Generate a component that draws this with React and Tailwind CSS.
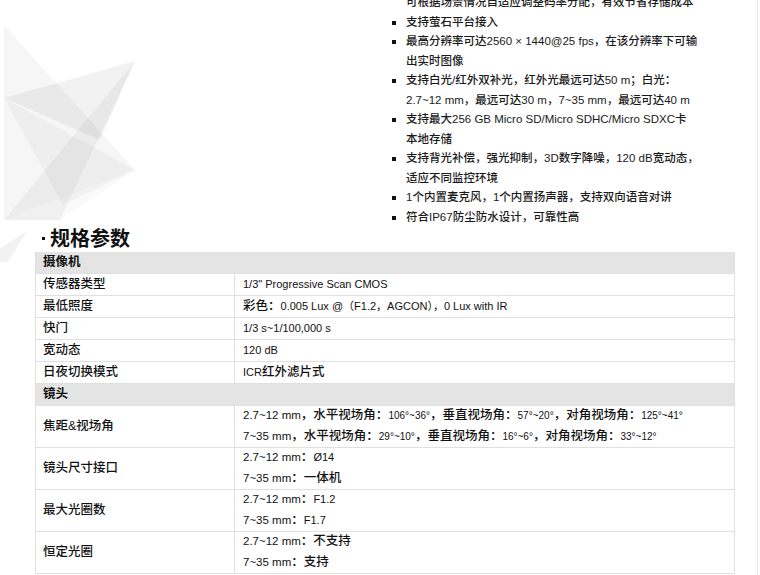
import React from "react";

const FONT = { fontFamily: '"Liberation Sans", "Noto Sans CJK SC", sans-serif' };

function Bullet() {
  return <span className="absolute left-[-14px] top-[8px] w-[4px] h-[4px] bg-[#111]" />;
}

const listItems = [
  { lines: ["可根据场景情况自适应调整码率分配，有效节省存储成本"], bullet: false },
  { lines: ["支持萤石平台接入"], bullet: true },
  { lines: ["最高分辨率可达2560 × 1440@25 fps，在该分辨率下可输", "出实时图像"], bullet: true },
  { lines: ["支持白光/红外双补光，红外光最远可达50 m；白光：", "2.7~12 mm，最远可达30 m，7~35 mm，最远可达40 m"], bullet: true },
  { lines: ["支持最大256 GB Micro SD/Micro SDHC/Micro SDXC卡", "本地存储"], bullet: true },
  { lines: ["支持背光补偿，强光抑制，3D数字降噪，120 dB宽动态，", "适应不同监控环境"], bullet: true },
  { lines: ["1个内置麦克风，1个内置扬声器，支持双向语音对讲"], bullet: true },
  { lines: ["符合IP67防尘防水设计，可靠性高"], bullet: true },
];

function Cn({ children }) {
  return <span className="text-[12.5px] font-medium">{children}</span>;
}

function HeaderRow({ children }) {
  return (
    <div className="h-[22px] bg-[#e4e4e4] border-b border-[#e0e0e0] flex items-center px-[7px] text-[12.5px] font-bold text-[#111]">
      {children}
    </div>
  );
}

function Row({ label, children }) {
  return (
    <div className="grid grid-cols-[199px_1fr] h-[22px] border-b border-[#e0e0e0]">
      <div className="border-r border-[#e0e0e0] flex items-center pl-[7px] text-[12.5px] font-medium text-[#111]">{label}</div>
      <div className="flex items-center pl-[8px] text-[11px] text-[#111] whitespace-nowrap">{children}</div>
    </div>
  );
}

function Row2({ label, a, b }) {
  return (
    <div className="grid grid-cols-[199px_1fr] h-[42px] border-b border-[#e0e0e0]">
      <div className="border-r border-[#e0e0e0] flex items-center pl-[7px] text-[12.5px] font-medium text-[#111]">{label}</div>
      <div className="flex flex-col pl-[8px] text-[11px] text-[#111] whitespace-nowrap -mt-[1px]">
        <div className="h-[21px] flex items-center">{a}</div>
        <div className="h-[21px] flex items-center">{b}</div>
      </div>
    </div>
  );
}

export default function App() {
  return (
    <div className="relative w-[760px] h-[575px] overflow-hidden bg-white" style={FONT}>
      <svg className="absolute left-0 top-0" width="140" height="265" viewBox="0 0 140 265">
        <polygon points="4,25 135,170 4,220" fill="#000" fillOpacity="0.035" />
        <polygon points="4,98 135,61 100,140" fill="#000" fillOpacity="0.05" />
        <polygon points="135,61 4,220 60,220" fill="#000" fillOpacity="0.04" />
        <polygon points="4,98 135,170 63,205" fill="#000" fillOpacity="0.03" />
        <polygon points="135,170 60,220 4,220" fill="#000" fillOpacity="0.02" />
        <polygon points="0,248 27,231 8,262 0,262" fill="#000" fillOpacity="0.05" />
      </svg>
      <div className="absolute top-0 bottom-0 left-[757px] w-px bg-[#e8e8e8]" />

      <div className="relative w-[757px]">
        <div className="pl-[406px] -mt-[7px] text-[11.5px] leading-[19.5px] text-[#1a1a1a] font-medium">
          {listItems.map((it, i) => (
            <div key={i} className="relative">
              {it.bullet && <Bullet />}
              {it.lines.map((l, j) => (
                <div key={j} className="whitespace-nowrap">{l}</div>
              ))}
            </div>
          ))}
        </div>

        <div className="h-[25px] flex items-center pl-[42px] text-[20px] font-bold text-[#111]">
          <span className="inline-block w-[3px] h-[3px] bg-[#111] mr-[5px] -mt-[3px]" />
          <span className="leading-[25px]">规格参数</span>
        </div>

        <div className="ml-[35px] w-[700px] border-l border-r border-[#e0e0e0]">
          <HeaderRow>摄像机</HeaderRow>
          <Row label="传感器类型">1/3" Progressive Scan CMOS</Row>
          <Row label="最低照度">
            <Cn>彩色：</Cn>0.005 Lux @（F1.2，AGCON），0 Lux with IR
          </Row>
          <Row label="快门">1/3 s~1/100,000 s</Row>
          <Row label="宽动态">120 dB</Row>
          <Row label="日夜切换模式">
            ICR<Cn>红外滤片式</Cn>
          </Row>
          <HeaderRow>镜头</HeaderRow>
          <Row2
            label="焦距&视场角"
            a={<><span className="text-[11.5px]">2.7~12 mm</span><Cn>，水平视场角：</Cn><span className="text-[10px]">106°~36°</span><Cn>，垂直视场角：</Cn><span className="text-[10px]">57°~20°</span><Cn>，对角视场角：</Cn><span className="text-[10px]">125°~41°</span></>}
            b={<><span className="text-[11.5px]">7~35 mm</span><Cn>，水平视场角：</Cn><span className="text-[10px]">29°~10°</span><Cn>，垂直视场角：</Cn><span className="text-[10px]">16°~6°</span><Cn>，对角视场角：</Cn><span className="text-[10px]">33°~12°</span></>}
          />
          <Row2
            label="镜头尺寸接口"
            a={<><span className="text-[11.5px]">2.7~12 mm</span><Cn>：</Cn>Ø14</>}
            b={<><span className="text-[11.5px]">7~35 mm</span><Cn>：一体机</Cn></>}
          />
          <Row2
            label="最大光圈数"
            a={<><span className="text-[11.5px]">2.7~12 mm</span><Cn>：</Cn>F1.2</>}
            b={<><span className="text-[11.5px]">7~35 mm</span><Cn>：</Cn>F1.7</>}
          />
          <Row2
            label="恒定光圈"
            a={<><span className="text-[11.5px]">2.7~12 mm</span><Cn>：不支持</Cn></>}
            b={<><span className="text-[11.5px]">7~35 mm</span><Cn>：支持</Cn></>}
          />
        </div>
      </div>
    </div>
  );
}
